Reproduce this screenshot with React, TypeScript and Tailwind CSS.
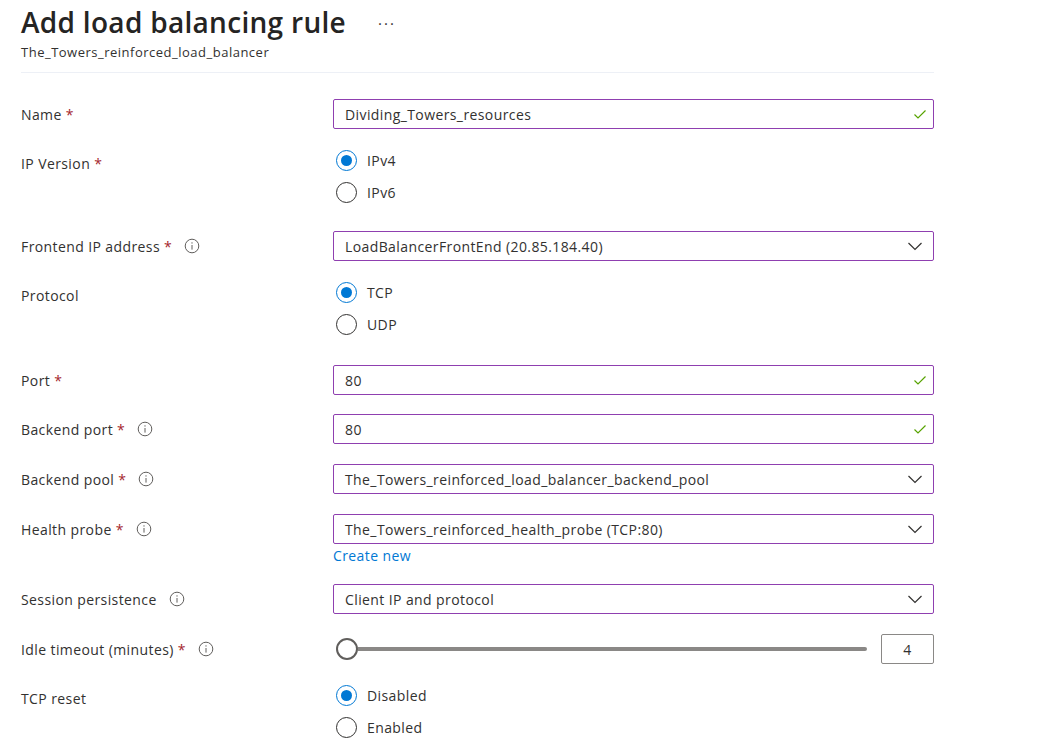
import type { ReactNode } from "react";

const FONT = "font-['Segoe_UI','Open_Sans','Noto_Sans',sans-serif]";

function Star() {
  return <span className="ml-1 text-[#a4262c]">*</span>;
}

function Info() {
  return (
    <svg className="ml-3 h-[16px] w-[16px]" viewBox="0 0 16 16" fill="none">
      <circle cx="8" cy="8" r="6.8" stroke="#605e5c" strokeWidth="1" />
      <line x1="8" y1="7" x2="8" y2="11.6" stroke="#605e5c" strokeWidth="1" />
      <circle cx="8" cy="4.9" r="0.7" fill="#605e5c" />
    </svg>
  );
}

function Check() {
  return (
    <svg className="h-4 w-4" viewBox="0 0 16 16" fill="none">
      <path d="M2.5 8.5 L6 12 L13.5 4.5" stroke="#57a300" strokeWidth="1.2" />
    </svg>
  );
}

function Chevron() {
  return (
    <svg className="h-4 w-4" viewBox="0 0 16 16" fill="none">
      <path d="M1.5 5 L8 11.5 L14.5 5" stroke="#323130" strokeWidth="1.2" />
    </svg>
  );
}

type RowProps = {
  label: string;
  required?: boolean;
  info?: boolean;
  top?: boolean;
  children: ReactNode;
};

function Row({ label, required, info, top, children }: RowProps) {
  return (
    <div className="flex">
      <div
        className={`flex w-[312px] shrink-0 items-center ${
          top ? "self-start pt-[9px]" : ""
        }`}
      >
        <span>{label}</span>
        {required && <Star />}
        {info && <Info />}
      </div>
      <div className="w-[601px]">{children}</div>
    </div>
  );
}

function TextField({ value }: { value: string }) {
  return (
    <div className="flex h-[30px] items-center justify-between rounded-[2px] border border-[#8f3fb0] pl-[11px] pr-[5px]">
      <span>{value}</span>
      <Check />
    </div>
  );
}

function Select({ value }: { value: string }) {
  return (
    <div className="flex h-[30px] items-center justify-between rounded-[2px] border border-[#8f3fb0] pl-[11px] pr-[10px]">
      <span>{value}</span>
      <Chevron />
    </div>
  );
}

function Radio({ label, checked }: { label: string; checked?: boolean }) {
  return (
    <div className="flex h-[32px] items-center pl-[3px]">
      <span
        className={`flex h-[21px] w-[21px] items-center justify-center rounded-full border ${
          checked ? "border-[#0078d4]" : "border-[#323130]"
        }`}
      >
        {checked && <span className="h-[11px] w-[11px] rounded-full bg-[#0078d4]" />}
      </span>
      <span className="ml-[10px]">{label}</span>
    </div>
  );
}

export default function App() {
  return (
    <div
      className={`${FONT} min-h-[738px] bg-white pl-[21px] pt-[2px] text-[14px] tracking-[0.4px] text-[#323130]`}
    >
      <div className="w-[913px] border-b border-[#edf0f6] pb-[10px]">
        <div className="flex items-center">
          <h1 className="text-[28px] font-semibold leading-[40px] tracking-[0.3px] text-[#252423]">
            Add load balancing rule
          </h1>
          <span className="ml-[32px] pb-[6px] text-[15px] tracking-[2px]">...</span>
        </div>
        <div className="text-[13px] leading-[20px] tracking-[0.5px] text-[#323130]">
          The_Towers_reinforced_load_balancer
        </div>
      </div>

      <div className="flex flex-col pt-[26px]">
        <Row label="Name" required>
          <TextField value="Dividing_Towers_resources" />
        </Row>

        <div className="mt-[15px]">
          <Row label="IP Version" required top>
            <Radio label="IPv4" checked />
            <Radio label="IPv6" />
          </Row>
        </div>

        <div className="mt-[23px]">
          <Row label="Frontend IP address" required info>
            <Select value="LoadBalancerFrontEnd (20.85.184.40)" />
          </Row>
        </div>

        <div className="mt-[15px]">
          <Row label="Protocol" top>
            <Radio label="TCP" checked />
            <Radio label="UDP" />
          </Row>
        </div>

        <div className="mt-[25px] flex flex-col gap-[20px]">
          <Row label="Port" required>
            <TextField value="80" />
          </Row>
          <div className="-mt-[1px]">
            <Row label="Backend port" required info>
              <TextField value="80" />
            </Row>
          </div>
          <Row label="Backend pool" required info>
            <Select value="The_Towers_reinforced_load_balancer_backend_pool" />
          </Row>
          <div className="flex">
            <div className="flex h-[30px] w-[312px] shrink-0 items-center">
              <span>Health probe</span>
              <Star />
              <Info />
            </div>
            <div className="w-[601px]">
              <Select value="The_Towers_reinforced_health_probe (TCP:80)" />
              <div className="mt-[2px] leading-[20px] text-[#0078d4]">Create new</div>
            </div>
          </div>
        </div>

        <div className="mt-[18px] flex flex-col gap-[20px]">
          <Row label="Session persistence" info>
            <Select value="Client IP and protocol" />
          </Row>
          <Row label="Idle timeout (minutes)" required info>
            <div className="flex items-center">
              <div className="flex flex-1 items-center pl-[3px] pr-[14px]">
                <span className="h-[22px] w-[22px] shrink-0 rounded-full border-2 border-[#605e5c] bg-white" />
                <span className="h-[4px] flex-1 rounded-r-full bg-[#8a8886]" />
              </div>
              <div className="flex h-[30px] w-[53px] items-center justify-center rounded-[2px] border border-[#8a8886]">
                4
              </div>
            </div>
          </Row>
        </div>

        <div className="mt-[15px]">
          <Row label="TCP reset" top>
            <Radio label="Disabled" checked />
            <Radio label="Enabled" />
          </Row>
        </div>
      </div>
    </div>
  );
}
